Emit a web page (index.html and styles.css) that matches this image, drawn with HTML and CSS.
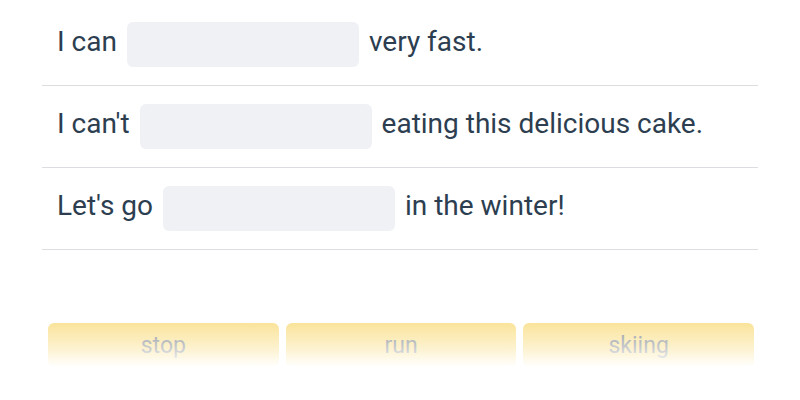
FILE: index.html
```html
<!DOCTYPE html>
<html lang="en">
<head>
<meta charset="utf-8">
<link rel="stylesheet" href="styles.css">
</head>
<body>
<div class="page">
  <ul class="sentences">
    <li class="row"><span>I can</span><span class="blank"></span><span>very fast.</span></li>
    <li class="row"><span>I can't</span><span class="blank"></span><span>eating this delicious cake.</span></li>
    <li class="row"><span>Let's go</span><span class="blank"></span><span>in the winter!</span></li>
  </ul>
  <div class="options">
    <button class="opt">stop</button>
    <button class="opt">run</button>
    <button class="opt">skiing</button>
  </div>
</div>
</body>
</html>
```
FILE: styles.css
```css
* { box-sizing: border-box; }
html, body { margin: 0; padding: 0; background: #fff; }
body { font-family: Roboto, "Noto Sans", sans-serif; color: #2c3e50; }
.page { width: 800px; height: 400px; padding: 4px 42px 0; position: relative; }
.sentences { list-style: none; margin: 0; padding: 0; }
.row {
  display: flex;
  align-items: center;
  gap: 10px;
  padding: 18px 15px;
  border-bottom: 1px solid #dcdde0;
  font-size: 28px;
  line-height: 32px;
}
.row span:not(.blank) { position: relative; top: -3px; }
.blank {
  width: 232px;
  height: 45px;
  background: #f0f1f5;
  border-radius: 6px;
}
.options {
  display: flex;
  gap: 7px;
  margin: 73px 4px 0 6px;
  position: relative;
}
.options::after {
  content: "";
  position: absolute;
  inset: 0;
  background: linear-gradient(to bottom, rgba(255,255,255,0) 0%, rgba(255,255,255,0.5) 55%, rgba(255,255,255,1) 100%);
  pointer-events: none;
}
.opt {
  flex: 1;
  height: 44px;
  border: none;
  border-radius: 6px;
  background: #fae49b;
  color: #8e949c;
  font-family: Roboto, "Noto Sans", sans-serif;
  font-size: 23px;
  padding: 0;
}
```
